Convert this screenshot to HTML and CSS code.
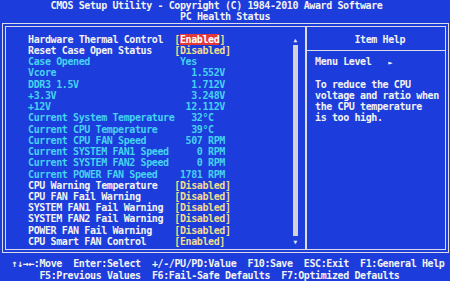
FILE: index.html
```html
<!DOCTYPE html>
<html lang="en">
<head>
    <meta charset="UTF-8">
    <title>CMOS Setup Utility - PC Health Status</title>
    <link rel="stylesheet" href="styles.css">
</head>
<body>
<div class="title title-main">CMOS Setup Utility - Copyright (C) 1984-2010 Award Software</div>
<div class="title title-sub">PC Health Status</div>

<div class="frame">
    <div class="left">
        <div class="items">
            <div class="row"><span>Hardware Thermal Control</span><span class="opt">[<span class="sel">Enabled</span>]</span></div>
            <div class="row"><span>Reset Case Open Status</span><span class="opt">[Disabled]</span></div>
            <div class="row info"><span>Case Opened</span><span> Yes</span></div>
            <div class="row info"><span>Vcore</span><span>   1.552V</span></div>
            <div class="row info"><span>DDR3 1.5V</span><span>   1.712V</span></div>
            <div class="row info"><span>+3.3V</span><span>   3.248V</span></div>
            <div class="row info"><span>+12V</span><span>  12.112V</span></div>
            <div class="row info"><span>Current System Temperature</span><span>   32°C</span></div>
            <div class="row info"><span>Current CPU Temperature</span><span>   39°C</span></div>
            <div class="row info"><span>Current CPU FAN Speed</span><span>  507 RPM</span></div>
            <div class="row info"><span>Current SYSTEM FAN1 Speed</span><span>    0 RPM</span></div>
            <div class="row info"><span>Current SYSTEM FAN2 Speed</span><span>    0 RPM</span></div>
            <div class="row info"><span>Current POWER FAN Speed</span><span> 1781 RPM</span></div>
            <div class="row"><span>CPU Warning Temperature</span><span class="opt">[Disabled]</span></div>
            <div class="row"><span>CPU FAN Fail Warning</span><span class="opt">[Disabled]</span></div>
            <div class="row"><span>SYSTEM FAN1 Fail Warning</span><span class="opt">[Disabled]</span></div>
            <div class="row"><span>SYSTEM FAN2 Fail Warning</span><span class="opt">[Disabled]</span></div>
            <div class="row"><span>POWER FAN Fail Warning</span><span class="opt">[Disabled]</span></div>
            <div class="row"><span>CPU Smart FAN Control</span><span class="opt">[Enabled]</span></div>
        </div>
        <div class="scroll">
            <div class="arrow">▲</div>
            <div class="track"></div>
            <div class="arrow">▼</div>
        </div>
    </div>
    <div class="help">
        <div class="help-head">Item Help</div>
        <div class="line">Menu Level   <span class="mark">►</span></div>
        <div class="help-text">To reduce the CPU
voltage and ratio when
the CPU temperature
is too high.</div>
    </div>
</div>

<div class="keys keys-1">↑↓→←:Move  Enter:Select  +/-/PU/PD:Value  F10:Save  ESC:Exit  F1:General Help</div>
<div class="keys keys-2">F5:Previous Values  F6:Fail-Safe Defaults  F7:Optimized Defaults</div>
</body>
</html>
```

FILE: styles.css
```css
/* 80x25 text screen: one cell is 5.625 x 11.24 px */
body { margin: 0; width: 450px; height: 281px; overflow: hidden; background-color: #1c3cdc; color: #f2f2f2; font: bold 10px/11.24px "DejaVu Sans Mono", monospace; letter-spacing: -0.395px; }
.title { height: 11.24px; white-space: pre; }
.title-main { padding-left: 50.6px; }
.title-sub { padding-left: 180px; }

/* main double frame */
.frame { display: flex; margin: 0.5px 1px 0 2px; height: 222px; border: 4px double #dcdce8; }
.left { display: flex; width: 299px; box-sizing: border-box; padding: 6.72px 0 0 22.1px; }
.items { width: 264.4px; }
.row { display: grid; grid-template-columns: 146.25px 118.1px; height: 11.24px; white-space: pre; }
.info { color: #46d2f2; }
.opt { color: #f0dc8c; }
.sel { background-color: #e43838; color: #ffffff; }

.scroll { width: 5.625px; display: flex; flex-direction: column; align-items: center; }
.scroll .arrow { height: 11.24px; font-size: 6px; line-height: 11.24px; letter-spacing: 0; color: #e8e8f0; }
.scroll .track { width: 5px; height: 191.08px; background-color: #d2d2da; }

.help { flex: 1; border-left: 2px solid #dcdce8; padding: 6.72px 0 0 8px; }
.help-head { margin-left: -8px; padding: 0 0 5.12px 47.4px; height: 11.24px; border-bottom: 1px solid #dcdce8; margin-bottom: 5.12px; }
.line { height: 11.24px; white-space: pre; }
.mark { font-size: 7px; }
.help-text { margin-top: 11.24px; white-space: pre; }

.keys { height: 11.24px; white-space: pre; }
.keys-1 { margin-top: 5.5px; padding-left: 11.25px; }
.keys-2 { padding-left: 39.4px; }
```
